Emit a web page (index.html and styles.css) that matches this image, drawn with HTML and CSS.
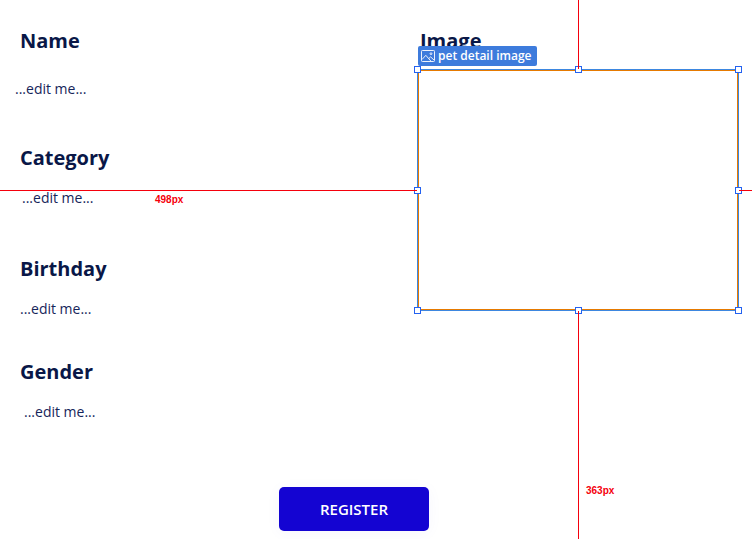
FILE: index.html
```html
<!DOCTYPE html>
<html lang="en">
<head>
<meta charset="utf-8">
<title>Pet detail</title>
<link rel="stylesheet" href="styles.css">
</head>
<body>
<main class="artboard">
  <div class="details">
    <div class="fields">
      <section class="field name"><h2>Name</h2><p>...edit me...</p></section>
      <section class="field category"><h2>Category</h2><p>...edit me...</p></section>
      <section class="field birthday"><h2>Birthday</h2><p>...edit me...</p></section>
      <section class="field gender"><h2>Gender</h2><p>...edit me...</p></section>
    </div>
    <section class="media">
      <h2>Image</h2>
      <div class="selection">
        <div class="tag">
          <svg class="tag-icon" width="14" height="12" viewBox="0 0 14 12" fill="none" stroke="currentColor"><rect x=".5" y=".5" width="13" height="11" rx=".8"/><path d="M1 9.5 4.8 5.3 9.8 11M7.8 8.5l1.8-1.6L13 10"/><circle cx="10" cy="3.7" r=".9"/></svg>
          <span>pet detail image</span>
        </div>
        <i class="guide up"></i><i class="guide left"></i><i class="guide right"></i><i class="guide down"></i>
        <i class="handle t l"></i><i class="handle t c"></i><i class="handle t r"></i>
        <i class="handle m l"></i><i class="handle m r"></i>
        <i class="handle b l"></i><i class="handle b c"></i><i class="handle b r"></i>
        <span class="measure across">498px</span>
        <span class="measure below">363px</span>
      </div>
    </section>
  </div>
  <button class="register">REGISTER</button>
</main>
</body>
</html>
```

FILE: styles.css
```css
* { box-sizing: border-box; }
body { margin: 0; background: #fff; color: #091747; font-family: "Open Sans", sans-serif; overflow: hidden; }
h2, p { margin: 0; }
h2 { font-size: 20px; line-height: 28px; font-weight: 700; }
p { font-size: 14px; line-height: 20px; color: #16255a; }
.artboard { height: 539px; overflow: hidden; padding-top: 27px; }
.details { display: grid; grid-template-columns: 417px 322px; height: 460px; }
.field { padding-left: 20px; }
.name { height: 117px; }
.category { height: 111px; }
.birthday { height: 103px; }
.field p { margin-top: 16px; }
.name p { margin: 24px 0 0 -5px; }
.category p { margin-left: 2px; }
.gender p { margin-left: 4px; }
.media h2 { padding-left: 3px; }
.selection { position: relative; height: 242px; margin-top: 14px; border: 1px solid #3d87e0; box-shadow: inset 0 0 0 1px #e67a00; }
.tag { position: absolute; left: 0; top: -24px; width: 119px; height: 20px; padding-left: 3px; display: flex; align-items: center; gap: 3px; border-radius: 2px; background: #3d7bdc; color: #fff; font-size: 12px; font-weight: 600; line-height: 20px; white-space: nowrap; }
.tag-icon { flex: none; opacity: .9; }
.guide { position: absolute; background: #f5000c; z-index: 2; }
.up { left: 160px; top: -70px; width: 1px; height: 69px; }
.down { left: 160px; top: 241px; width: 1px; height: 229px; }
.left { left: -418px; top: 120px; width: 417px; height: 1px; }
.right { left: 321px; top: 120px; width: 14px; height: 1px; }
.handle { position: absolute; width: 7px; height: 7px; border: 1px solid #2462f0; background: #fff; z-index: 1; }
.handle.t { top: -4px; }
.handle.m { top: 117px; }
.handle.b { top: 237px; }
.handle.l { left: -4px; }
.handle.c { left: 157px; }
.handle.r { left: 317px; }
.measure { position: absolute; color: #f5000c; font: 700 10px/12px "Liberation Sans", sans-serif; }
.across { left: -263px; top: 124px; }
.below { left: 168px; top: 415px; }
.register { display: block; width: 150px; height: 44px; margin-left: 279px; padding: 1px 0 0; border: 0; border-radius: 5px; background: #1404d2; color: #fff; font: 600 15px/43px "Open Sans", sans-serif; box-shadow: 0 2px 16px rgba(20, 4, 210, .04); }
```
